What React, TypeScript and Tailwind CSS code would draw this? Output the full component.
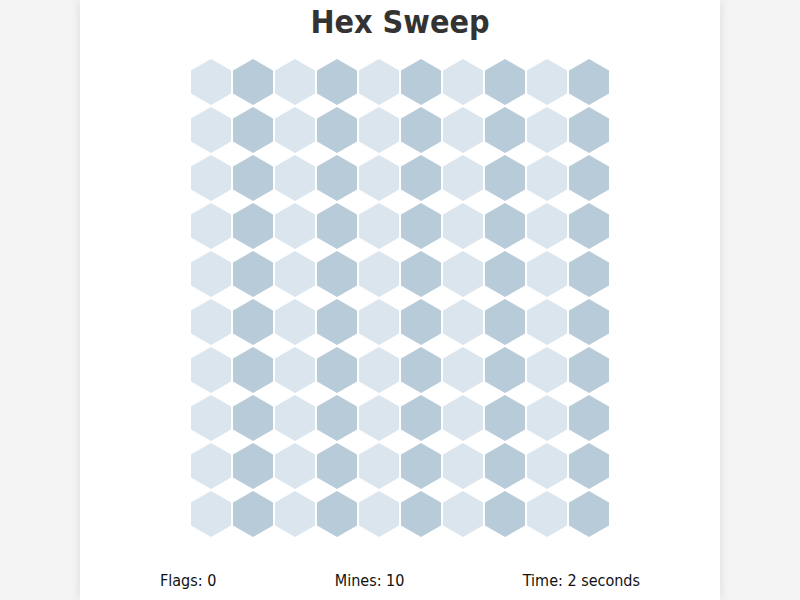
import React from 'react';

const ROWS = 10;
const COLS = 10;

function Hex({ dark }: { dark: boolean }) {
  return (
    <div
      className={`w-[40px] h-[46px] [clip-path:polygon(50%_0,100%_25%,100%_75%,50%_100%,0_75%,0_25%)] ${
        dark ? 'bg-[#b8cbd8]' : 'bg-[#dbe5ee]'
      }`}
    />
  );
}

export default function App() {
  const cells = [];
  for (let r = 0; r < ROWS; r++) {
    for (let c = 0; c < COLS; c++) {
      cells.push(<Hex key={`${r}-${c}`} dark={c % 2 === 1} />);
    }
  }

  return (
    <div className="min-h-screen bg-[#f4f4f4] font-['DejaVu_Sans_Condensed','DejaVu_Sans',sans-serif]">
      <div className="mx-auto w-[640px] min-h-screen bg-white shadow-[0_0_10px_rgba(0,0,0,0.1)] pt-[4px]">
        <h1 className="text-center text-[32px] leading-[37px] font-bold text-[#333]">Hex Sweep</h1>

        {/* board */}
        <div className="mt-[18px] mx-auto w-[418px] grid grid-cols-[repeat(10,40px)] gap-[2px]">
          {cells}
        </div>

        {/* status */}
        <div className="mt-[34px] mx-auto w-[480px] flex justify-between text-[16px] leading-[19px] text-[#111]">
          <span>Flags: 0</span>
          <span>Mines: 10</span>
          <span>Time: 2 seconds</span>
        </div>
      </div>
    </div>
  );
}
